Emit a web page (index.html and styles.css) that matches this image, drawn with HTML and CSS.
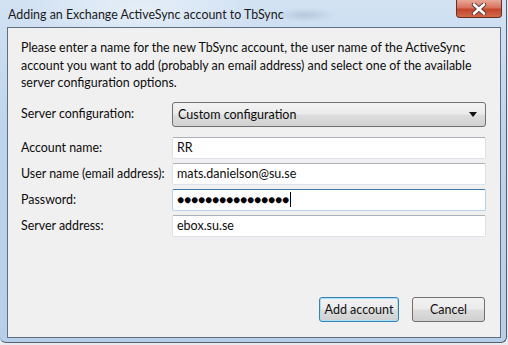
FILE: index.html
```html
<!DOCTYPE html>
<html lang="en">
<head>
    <meta charset="UTF-8">
    <title>Adding an Exchange ActiveSync account to TbSync</title>
    <link rel="stylesheet" href="styles.css">
</head>
<body>
<div class="window">
    <div class="titlebar">
        <span class="title">Adding an Exchange ActiveSync account to TbSync</span>
        <div class="close-btn">
            <svg width="20" height="12" viewBox="0 0 20 12">
                <path d="M5 1.5 L15 10.5 M15 1.5 L5 10.5" stroke="#5a3a34" stroke-width="4.4" stroke-linecap="round"/>
                <path d="M5 1.5 L15 10.5 M15 1.5 L5 10.5" stroke="#ffffff" stroke-width="2.6" stroke-linecap="round"/>
            </svg>
        </div>
    </div>

    <div class="client">
        <p class="intro">Please enter a name for the new TbSync account, the user name of the ActiveSync account you want to add (probably an email address) and select one of the available server configuration options.</p>

        <div class="form">
            <label class="label select-row">Server configuration:</label>
            <div class="select select-row">
                <span>Custom configuration</span>
                <span class="arrow"></span>
            </div>

            <label class="label">Account name:</label>
            <div class="field">RR</div>

            <label class="label">User name (email address):</label>
            <div class="field">mats.danielson@su.se</div>

            <label class="label">Password:</label>
            <div class="field focused"><span class="dots">●●●●●●●●●●●●●●●●</span><span class="caret"></span></div>

            <label class="label">Server address:</label>
            <div class="field">ebox.su.se</div>
        </div>

        <div class="actions">
            <button class="btn default">Add account</button>
            <button class="btn">Cancel</button>
        </div>
    </div>
</div>
</body>
</html>
```

FILE: styles.css
```css
body {
    margin: 0;
    width: 508px;
    height: 345px;
    overflow: hidden;
    background: #e8ecf0;
    font-family: Lato, 'Liberation Sans', sans-serif;
    font-size: 12.4px;
    color: #0c0c0c;
}

.window {
    box-sizing: border-box;
    width: 507px;
    height: 343px;
    display: flex;
    flex-direction: column;
    padding: 0 5px 4px 7px;
    border-right: 1px solid #55606c;
    border-bottom: 1px solid #55606c;
    border-radius: 0 0 6px 6px;
    background:
        radial-gradient(ellipse 30px 7px at 305px 15px, rgba(170, 190, 212, 0.7), transparent),
        radial-gradient(ellipse 120px 40px at 140px 10px, rgba(255, 255, 255, 0.45), transparent),
        linear-gradient(180deg, #d2e2f3 0%, #bcd4ec 40%, #b7cfe8 100%);
}

.titlebar {
    height: 27px;
    display: flex;
    justify-content: space-between;
    align-items: flex-start;
}

.title {
    margin-top: 7px;
    margin-left: 1px;
    color: #1a1a1a;
}

.close-btn {
    width: 46px;
    height: 18px;
    box-sizing: border-box;
    margin-right: -1px;
    border: 1px solid #6b2e24;
    border-top: none;
    border-radius: 0 0 4px 4px;
    background: linear-gradient(180deg, #e9a898 0%, #d8735c 45%, #c4452c 55%, #d36a4c 100%);
    display: flex;
    justify-content: center;
    align-items: center;
}

.client {
    flex: 1;
    display: flex;
    flex-direction: column;
    background: #f0f0f0;
    border: 1px solid #5f6f81;
    padding: 11px 14px 15px 13px;
}

.intro {
    margin: 0;
    line-height: 17.5px;
}

.form {
    display: grid;
    grid-template-columns: 151px 1fr;
    row-gap: 4px;
    margin-top: 10px;
    align-items: center;
}

.label {
    line-height: 16px;
}

.select-row {
    margin-bottom: 6px;
}

.select {
    height: 25px;
    box-sizing: border-box;
    display: flex;
    justify-content: space-between;
    align-items: center;
    padding: 0 8px 0 5px;
    border: 1px solid #707070;
    border-radius: 3px;
    background: linear-gradient(180deg, #f3f3f3 0%, #ebebeb 48%, #dddddd 52%, #d1d1d1 100%);
    font-size: 12.5px;
}

.arrow {
    width: 0;
    height: 0;
    border-left: 4px solid transparent;
    border-right: 4px solid transparent;
    border-top: 5px solid #111;
}

.field {
    height: 22px;
    box-sizing: border-box;
    display: flex;
    align-items: center;
    padding: 0 4px;
    border: 1px solid #dde2e8;
    border-top-color: #acb0b7;
    border-radius: 2px;
    background: #fff;
    font-size: 12.5px;
}

.field.focused {
    border-color: #b7d2ea;
    border-top-color: #3d7bad;
}

.dots {
    font-size: 12px;
    letter-spacing: -0.2px;
    color: #000;
}

.caret {
    width: 1px;
    height: 15px;
    margin-left: 1px;
    background: #000;
}

.actions {
    margin-top: auto;
    display: flex;
    justify-content: flex-end;
    gap: 13px;
    padding-right: 1px;
}

.btn {
    height: 25px;
    box-sizing: border-box;
    border: 1px solid #707070;
    border-radius: 3px;
    background: linear-gradient(180deg, #f2f2f2 0%, #ebebeb 48%, #dddddd 52%, #cfcfcf 100%);
    font-family: inherit;
    font-size: 12.5px;
    color: #111;
    width: 73px;
    padding: 0;
}

.btn.default {
    width: 80px;
    border-color: #3c7fb1;
    box-shadow: inset 0 0 0 1px #a6e2f7;
}
```
